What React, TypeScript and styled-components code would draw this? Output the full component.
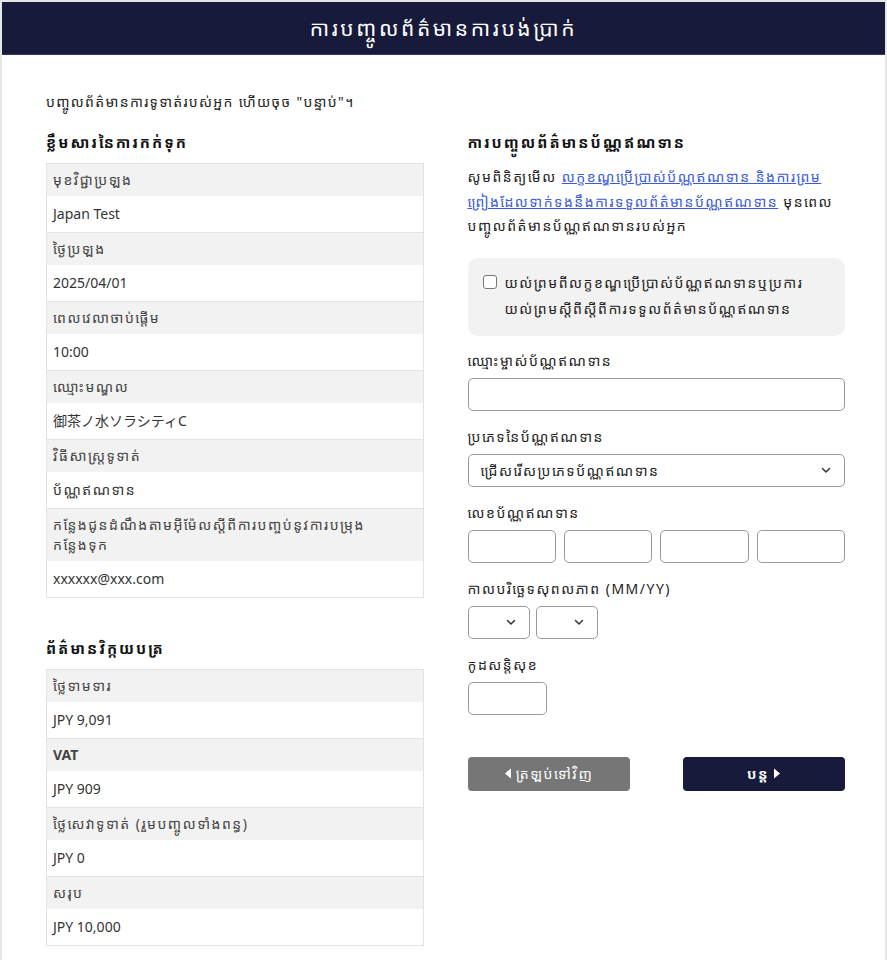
import React from "react";
import styled, { createGlobalStyle } from "styled-components";

const Global = createGlobalStyle`
  html, body { margin: 0; padding: 0; background: #e6e6e6; }
  body {
    font-family: "Noto Sans", "Noto Sans Khmer", "Khmer OS", "DejaVu Sans", "Noto Sans CJK JP", sans-serif;
    color: #222;
    font-size: 14px;
  }
  * { box-sizing: border-box; }
`;

const KM = "1.5px";

const Frame = styled.div`
  padding: 2px;
  min-height: 960px;
  display: flex;
`;

const Card = styled.div`
  background: #fff;
  flex: 1;
  display: flex;
  flex-direction: column;
`;

const Header = styled.header`
  background: #171a3a;
  height: 53px;
  display: flex;
  align-items: center;
  justify-content: center;
  color: #fff;
  font-size: 21px;
  letter-spacing: 2.6px;
  border-bottom: 1px solid #3a3d5a;
`;

const Body = styled.main`
  padding: 36px 40px 20px 44px;
`;

const Intro = styled.p`
  margin: 0 0 18px;
  font-size: 14px;
  line-height: 22px;
  letter-spacing: 1.3px;
`;

const Columns = styled.div`
  display: grid;
  grid-template-columns: 1fr 1fr;
  column-gap: 44px;
`;

const Column = styled.section`
  display: flex;
  flex-direction: column;
`;

const Heading = styled.h2<{ $top?: number; $bottom?: number }>`
  margin: ${(p) => p.$top ?? 0}px 0 ${(p) => p.$bottom ?? 10}px;
  font-size: 15px;
  font-weight: 700;
  line-height: 22px;
  letter-spacing: 2px;
  color: #111;
`;

const Table = styled.div`
  border: 1px solid #e2e2e2;
  display: flex;
  flex-direction: column;
`;

const LabelRow = styled.div<{ $bold?: boolean }>`
  background: #f2f2f2;
  padding: 6px 6px;
  min-height: 32px;
  line-height: 20px;
  font-size: 14px;
  color: #444;
  letter-spacing: ${(p) => (p.$bold ? "0" : KM)};
  font-weight: ${(p) => (p.$bold ? 700 : 400)};
  border-top: 1px solid #e4e4e4;
  &:first-child { border-top: none; }
`;

const ValueRow = styled.div<{ $km?: boolean }>`
  background: #fff;
  padding: 8px 6px;
  min-height: 36px;
  line-height: 20px;
  font-size: 14px;
  color: #333;
  letter-spacing: ${(p) => (p.$km ? KM : "0")};
`;

const Para = styled.p`
  margin: 0 0 19px;
  line-height: 24.5px;
  font-size: 14px;
  letter-spacing: ${KM};
  color: #222;
`;

const Link = styled.a`
  color: #3a5bd9;
  text-decoration: underline;
`;

const AgreeBox = styled.label`
  background: #f2f2f2;
  border-radius: 10px;
  padding: 12px 16px 14px 15px;
  display: flex;
  gap: 8px;
  align-items: flex-start;
  line-height: 26px;
  font-size: 14px;
  letter-spacing: ${KM};
  color: #222;
  margin-bottom: 14px;
`;

const Check = styled.span`
  flex: 0 0 auto;
  width: 14px;
  height: 14px;
  border: 1px solid #777;
  border-radius: 3px;
  background: #fff;
  margin-top: 5px;
`;

const Field = styled.div`
  display: flex;
  flex-direction: column;
  margin-bottom: 15px;
`;

const FieldLabel = styled.div`
  font-size: 14px;
  line-height: 22px;
  letter-spacing: ${KM};
  color: #222;
  margin-bottom: 6px;
`;

const Input = styled.div<{ $w?: number }>`
  height: 33px;
  width: ${(p) => (p.$w ? `${p.$w}px` : "100%")};
  border: 1px solid #9a9a9a;
  border-radius: 5px;
  background: #fff;
`;

const Select = styled.div<{ $w?: number }>`
  height: 33px;
  width: ${(p) => (p.$w ? `${p.$w}px` : "100%")};
  border: 1px solid #9a9a9a;
  border-radius: 5px;
  background: #fff;
  display: flex;
  align-items: center;
  justify-content: space-between;
  padding: 0 12px 0 12px;
  font-size: 14px;
  letter-spacing: ${KM};
  color: #222;
`;

const Row = styled.div<{ $gap: number }>`
  display: flex;
  gap: ${(p) => p.$gap}px;
`;

const Quad = styled.div`
  display: grid;
  grid-template-columns: repeat(4, 1fr);
  gap: 8px;
`;

const Buttons = styled.div`
  display: flex;
  justify-content: space-between;
  margin-top: 27px;
`;

const Button = styled.button<{ $variant: "back" | "next" }>`
  width: 162px;
  height: 34px;
  border: none;
  border-radius: 4px;
  background: ${(p) => (p.$variant === "back" ? "#767676" : "#171a3a")};
  color: #fff;
  font-family: inherit;
  font-size: 14px;
  letter-spacing: ${KM};
  font-weight: ${(p) => (p.$variant === "back" ? 400 : 700)};
  display: flex;
  align-items: center;
  justify-content: center;
  gap: 4px;
  cursor: pointer;
`;

const Chevron = () => (
  <svg width="12" height="12" viewBox="0 0 12 12" fill="none">
    <path d="M2.5 4.5 6 8l3.5-3.5" stroke="#333" strokeWidth="1.5" strokeLinecap="round" strokeLinejoin="round" />
  </svg>
);

const TriLeft = () => (
  <svg width="8" height="11" viewBox="0 0 8 11"><path d="M7 0.5v10L1 5.5z" fill="#fff" /></svg>
);
const TriRight = () => (
  <svg width="8" height="11" viewBox="0 0 8 11"><path d="M1 0.5v10l6-5z" fill="#fff" /></svg>
);

const booking: [string, string, boolean?][] = [
  ["មុខវិជ្ជាប្រឡង", "Japan Test"],
  ["ថ្ងៃប្រឡង", "2025/04/01"],
  ["ពេលវេលាចាប់ផ្ដើម", "10:00"],
  ["ឈ្មោះមណ្ឌល", "御茶ノ水ソラシティC"],
  ["វិធីសាស្រ្តទូទាត់", "ប័ណ្ណឥណទាន", true],
  ["កន្លែងជូនដំណឹងតាមអ៊ីម៉ែលស្ដីពីការបញ្ចប់នូវការបម្រុងកន្លែង\u2060ទុក", "xxxxxx@xxx.com"],
];

const invoice: [string, string, boolean?][] = [
  ["ថ្លៃទាមទារ", "JPY 9,091"],
  ["VAT", "JPY 909", true],
  ["ថ្លៃសេវាទូទាត់ (រួមបញ្ចូលទាំងពន្ធ)", "JPY 0"],
  ["សរុប", "JPY 10,000"],
];

export default function App() {
  return (
    <>
      <Global />
      <Frame>
        <Card>
          <Header>ការបញ្ចូលព័ត៌មានការបង់ប្រាក់</Header>
          <Body>
            <Intro>បញ្ចូលព័ត៌មានការទូទាត់របស់អ្នក ហើយចុច "បន្ទាប់"។</Intro>
            <Columns>
              <Column>
                <Heading>ខ្លឹមសារនៃការកក់ទុក</Heading>
                <Table>
                  {booking.map(([l, v, km]) => (
                    <React.Fragment key={l}>
                      <LabelRow>{l}</LabelRow>
                      <ValueRow $km={km}>{v}</ValueRow>
                    </React.Fragment>
                  ))}
                </Table>
                <Heading $top={39}>ព័ត៌មានវិក្កយបត្រ</Heading>
                <Table>
                  {invoice.map(([l, v, b]) => (
                    <React.Fragment key={l}>
                      <LabelRow $bold={b}>{l}</LabelRow>
                      <ValueRow>{v}</ValueRow>
                    </React.Fragment>
                  ))}
                </Table>
              </Column>
              <Column>
                <Heading $bottom={12}>ការបញ្ចូលព័ត៌មានប័ណ្ណឥណទាន</Heading>
                <Para>
                  សូមពិនិត្យមើល{" "}
                  <Link href="#">លក្ខខណ្ឌប្រើប្រាស់ប័ណ្ណឥណទាន និងការព្រមព្រៀងដែលទាក់ទងនឹងការទទួលព័ត៌មានប័ណ្ណឥណទាន</Link>{" "}
                  មុនពេលបញ្ចូលព័ត៌មានប័ណ្ណឥណទានរបស់អ្នក
                </Para>
                <AgreeBox>
                  <Check />
                  <span>យល់ព្រមពីលក្ខខណ្ឌប្រើប្រាស់ប័ណ្ណឥណទានឬប្រការយល់ព្រមស្ដីពីស្ដីពីការទទួលព័ត៌មានប័ណ្ណឥណទាន</span>
                </AgreeBox>
                <Field>
                  <FieldLabel>ឈ្មោះម្ចាស់ប័ណ្ណឥណទាន</FieldLabel>
                  <Input />
                </Field>
                <Field>
                  <FieldLabel>ប្រភេទនៃប័ណ្ណឥណទាន</FieldLabel>
                  <Select>
                    <span>ជ្រើសរើសប្រភេទប័ណ្ណឥណទាន</span>
                    <Chevron />
                  </Select>
                </Field>
                <Field>
                  <FieldLabel>លេខប័ណ្ណឥណទាន</FieldLabel>
                  <Quad>
                    <Input />
                    <Input />
                    <Input />
                    <Input />
                  </Quad>
                </Field>
                <Field>
                  <FieldLabel>កាលបរិច្ឆេទសុពលភាព (MM/YY)</FieldLabel>
                  <Row $gap={6}>
                    <Select $w={62}><span /><Chevron /></Select>
                    <Select $w={62}><span /><Chevron /></Select>
                  </Row>
                </Field>
                <Field>
                  <FieldLabel>កូដសន្តិសុខ</FieldLabel>
                  <Input $w={79} />
                </Field>
                <Buttons>
                  <Button $variant="back"><TriLeft />ត្រឡប់ទៅវិញ</Button>
                  <Button $variant="next">បន្ត<TriRight /></Button>
                </Buttons>
              </Column>
            </Columns>
          </Body>
        </Card>
      </Frame>
    </>
  );
}
